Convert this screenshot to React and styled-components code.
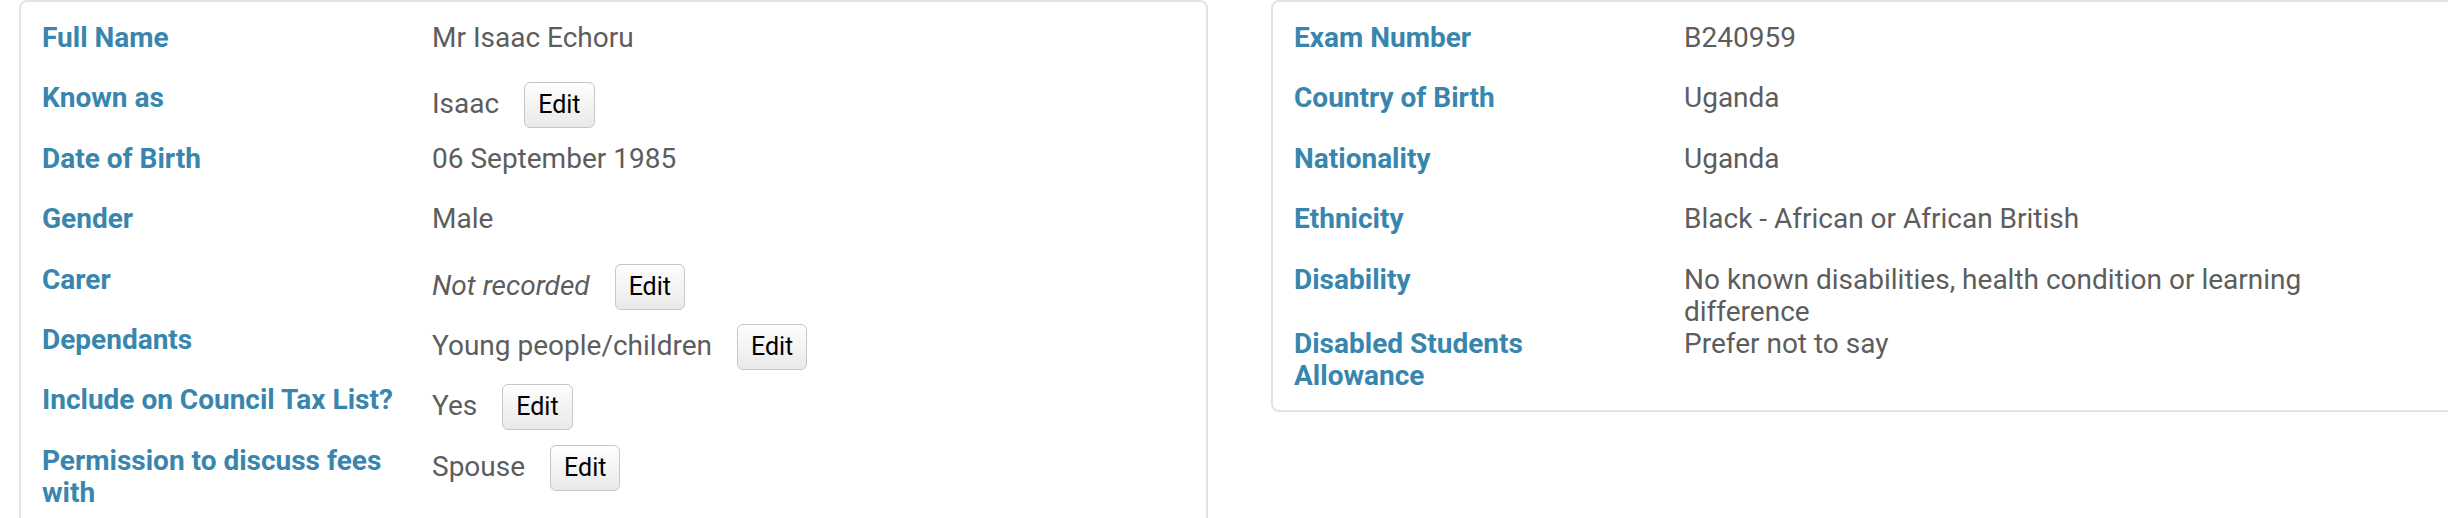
import React from 'react';
import styled, { createGlobalStyle } from 'styled-components';

const Global = createGlobalStyle`
	html, body {
		margin: 0;
		padding: 0;
		background: #ffffff;
		overflow: hidden;
	}
	body {
		font-family: Roboto, "Liberation Sans", Arial, sans-serif;
	}
`;

const Page = styled.div`
	display: grid;
	grid-template-columns: 1189px 1189px;
	column-gap: 63px;
	align-items: start;
	width: max-content;
	padding-left: 19px;
`;

const Card = styled.section`
	border: 2px solid #e3e3e3;
	border-radius: 8px;
	padding: 20px 21px 18px 21px;
	background: #ffffff;
`;

const Row = styled.div`
	display: grid;
	grid-template-columns: 390px 1fr;
	align-items: start;
	min-height: 60.4px;
	font-size: 28px;
	line-height: 32px;
`;

const Label = styled.div`
	padding-right: 38px;
	font-weight: 700;
	color: #3886ad;
`;

const Value = styled.div`
	padding-right: 24px;
	color: #5d5d5d;
	font-style: ${props => props.muted ? 'italic' : 'normal'};
`;

const EditButton = styled.button`
	display: inline-block;
	margin-left: 25px;
	padding: 7px 13px;
	border: 1px solid #c6c6c6;
	border-radius: 6px;
	background: linear-gradient(#fefefe, #e9e9e9);
	color: #000000;
	font-family: Roboto, "Liberation Sans", Arial, sans-serif;
	font-size: 25px;
	font-style: normal;
	line-height: 30px;
	cursor: pointer;
`;

const personal = [
	{ label: 'Full Name', value: 'Mr Isaac Echoru' },
	{ label: 'Known as', value: 'Isaac', edit: true },
	{ label: 'Date of Birth', value: '06 September 1985' },
	{ label: 'Gender', value: 'Male' },
	{ label: 'Carer', value: 'Not recorded', muted: true, edit: true },
	{ label: 'Dependants', value: 'Young people/children', edit: true },
	{ label: 'Include on Council Tax List?', value: 'Yes', edit: true },
	{ label: 'Permission to discuss fees with', value: 'Spouse', edit: true },
];

const background = [
	{ label: 'Exam Number', value: 'B240959' },
	{ label: 'Country of Birth', value: 'Uganda' },
	{ label: 'Nationality', value: 'Uganda' },
	{ label: 'Ethnicity', value: 'Black - African or African British' },
	{ label: 'Disability', value: 'No known disabilities, health condition or learning difference' },
	{ label: 'Disabled Students Allowance', value: 'Prefer not to say' },
];

const DetailList = ({ items }) => (
	<Card>
		{items.map(item => (
			<Row key={item.label}>
				<Label>{item.label}</Label>
				<Value muted={item.muted}>
					{item.value}
					{item.edit && <EditButton type="button">Edit</EditButton>}
				</Value>
			</Row>
		))}
	</Card>
);

const App = () => {
	return (
		<>
			<Global />
			<Page>
				<DetailList items={personal} />
				<DetailList items={background} />
			</Page>
		</>
	);
};

export default App;
